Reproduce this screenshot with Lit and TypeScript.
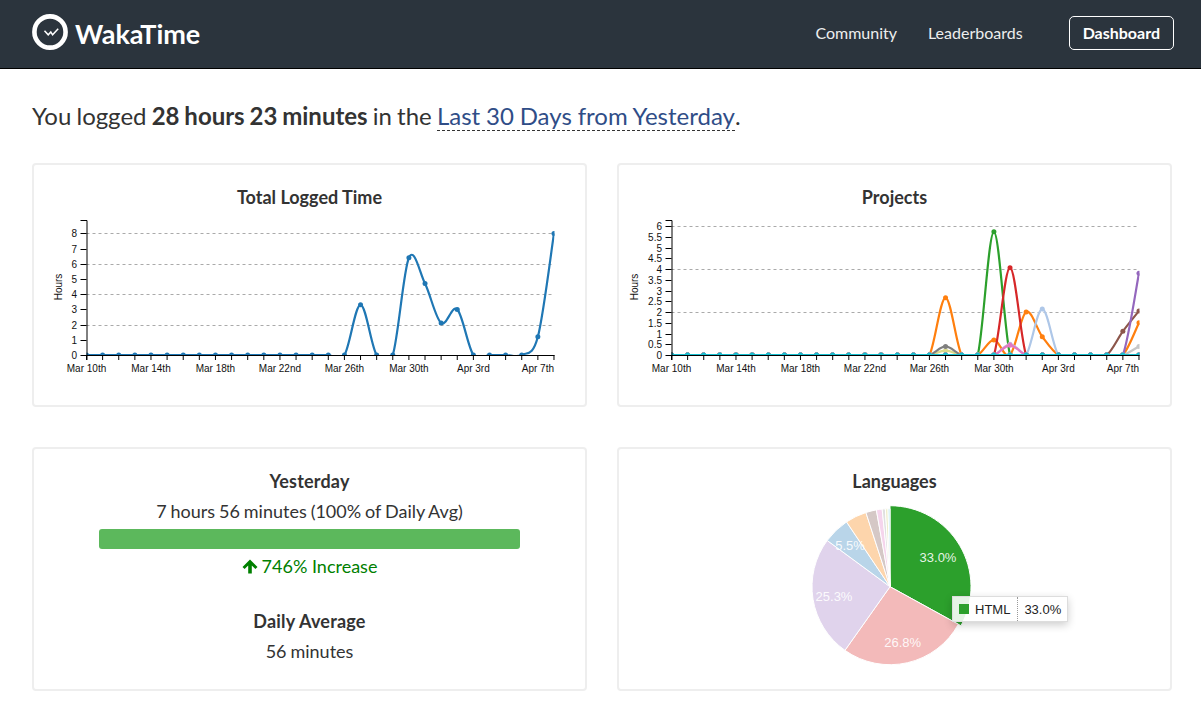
import { LitElement, html, css, svg } from "lit";
import { customElement } from "lit/decorators.js";

type Series = { color: string; values: Record<number, number> };

const LABELS = ["Mar 10th", "Mar 14th", "Mar 18th", "Mar 22nd", "Mar 26th", "Mar 30th", "Apr 3rd", "Apr 7th"];
const COUNT = 30;
const STEP = 16.12;

const TOTAL: Series[] = [
  { color: "#1f77b4", values: { 17: 3.3, 20: 6.4, 21: 4.7, 22: 2.1, 23: 3, 28: 1.2, 29: 8 } },
];

const PROJECTS: Series[] = [
  { color: "#dbdb8d", values: { 17: 0.2 } },
  { color: "#7f7f7f", values: { 17: 0.4 } },
  { color: "#ff7f0e", values: { 17: 2.66, 20: 0.7, 22: 2, 23: 0.85, 29: 1.5 } },
  { color: "#2ca02c", values: { 20: 5.73 } },
  { color: "#c5b0d5", values: { 21: 0.5 } },
  { color: "#d62728", values: { 21: 4.06 } },
  { color: "#e377c2", values: { 21: 0.45 } },
  { color: "#aec7e8", values: { 23: 2.14 } },
  { color: "#8c564b", values: { 28: 1.1, 29: 2.05 } },
  { color: "#9467bd", values: { 29: 3.8 } },
  { color: "#c7c7c7", values: { 29: 0.4 } },
  { color: "#17becf", values: {} },
];

const SLICES = [
  { pct: 33, color: "#2ca02c" },
  { pct: 26.8, color: "#f3baba" },
  { pct: 25.3, color: "#e0d3ec" },
  { pct: 5.5, color: "#b9d5e9" },
  { pct: 4.4, color: "#fdd5ac" },
  { pct: 2.2, color: "#d5c8c6" },
  { pct: 1.2, color: "#f5d5ec" },
  { pct: 0.65, color: "#e0e0e0" },
  { pct: 0.55, color: "#eeeecb" },
  { pct: 0.4, color: "#bbeaf0" },
];

const PIE_LABELS = [
  { text: "33.0%", x: 126, y: 57 },
  { text: "26.8%", x: 90.7, y: 141.5 },
  { text: "25.3%", x: 22, y: 95.5 },
  { text: "5.5%", x: 38, y: 45 },
];

// catmull-rom through the points, like the d3 "cardinal" line of the original
function linePath(points: [number, number][]) {
  let d = `M${points[0][0]},${points[0][1]}`;
  for (let i = 0; i < points.length - 1; i++) {
    const p0 = points[Math.max(i - 1, 0)];
    const p1 = points[i];
    const p2 = points[i + 1];
    const p3 = points[Math.min(i + 2, points.length - 1)];
    const c1x = p1[0] + (p2[0] - p0[0]) / 6;
    const c1y = p1[1] + (p2[1] - p0[1]) / 6;
    const c2x = p2[0] - (p3[0] - p1[0]) / 6;
    const c2y = p2[1] - (p3[1] - p1[1]) / 6;
    d += `C${c1x.toFixed(2)},${c1y.toFixed(2)} ${c2x.toFixed(2)},${c2y.toFixed(2)} ${p2[0].toFixed(2)},${p2[1].toFixed(2)}`;
  }
  return d;
}

function slicePath(cx: number, cy: number, r: number, from: number, to: number) {
  const a0 = (from / 100) * Math.PI * 2;
  const a1 = (to / 100) * Math.PI * 2;
  const large = to - from > 50 ? 1 : 0;
  const x0 = cx + r * Math.sin(a0);
  const y0 = cy - r * Math.cos(a0);
  const x1 = cx + r * Math.sin(a1);
  const y1 = cy - r * Math.cos(a1);
  return `M${cx},${cy}L${x0.toFixed(2)},${y0.toFixed(2)}A${r},${r} 0 ${large} 1 ${x1.toFixed(2)},${y1.toFixed(2)}Z`;
}

@customElement("line-chart")
class LineChart extends LitElement {
  static properties = {
    series: { attribute: false },
    ticks: { attribute: false },
    grid: { attribute: false },
    scale: { type: Number },
    labelX: { type: Number },
  };

  series: Series[] = [];
  ticks: number[] = [];
  grid: number[] = [];
  scale = 1;
  labelX = 14;

  static styles = css`
    :host {
      display: block;
      height: 170px;
    }
    svg {
      display: block;
      overflow: visible;
    }
    text {
      font-family: "Liberation Sans", Arial, sans-serif;
      font-size: 10px;
      fill: #111;
    }
    .axis {
      stroke: #000;
      stroke-width: 1;
      fill: none;
    }
    .grid {
      stroke: #aaa;
      stroke-width: 1;
      stroke-dasharray: 3 3;
    }
    .line {
      fill: none;
      stroke-width: 2.2;
    }
  `;

  render() {
    const y0 = 146;
    const x0 = 39.5;
    const xs = Array.from({ length: COUNT }, (_, i) => x0 + i * STEP);
    const right = xs[COUNT - 1];
    const id = `clip${this.ticks.length}`;
    return html`<svg width="550" height="170" viewBox="0 0 550 170">
      <defs>
        <clipPath id=${id}><rect x=${x0} y="0" width=${right - x0 + 0.5} height=${y0 + 0.5}></rect></clipPath>
      </defs>
      ${this.grid.map((v) => {
        const y = Math.round(y0 - v * this.scale) + 0.5;
        return svg`<line class="grid" x1=${x0} x2=${right} y1=${y} y2=${y}></line>`;
      })}
      <g clip-path=${`url(#${id})`}>
        ${this.series.map((s) => {
          const pts = xs.map((x, i) => [x, y0 - (s.values[i] ?? 0) * this.scale] as [number, number]);
          return svg`<path class="line" stroke=${s.color} d=${linePath(pts)}></path>
            ${pts.map((p) => svg`<circle cx=${p[0]} cy=${p[1]} r="2.5" fill=${s.color}></circle>`)}`;
        })}
      </g>
      <path class="axis" d="M${x0 - 6},11.5H${x0 + 0.5}V${y0 + 5}M${x0},${y0 + 0.5}H${right + 0.5}"></path>
      ${this.ticks.map((v) => {
        const y = Math.round(y0 - v * this.scale) + 0.5;
        return svg`<line class="axis" x1=${x0 - 6} x2=${x0} y1=${y} y2=${y}></line>
          <text x=${x0 - 9.5} y=${y + 3.5} text-anchor="end">${v}</text>`;
      })}
      ${xs.map((x) => svg`<line class="axis" x1=${x} x2=${x} y1=${y0} y2=${y0 + 5}></line>`)}
      ${LABELS.map(
        (l, i) => svg`<text x=${x0 + i * 4 * STEP} y=${y0 + 17} text-anchor="middle">${l}</text>`,
      )}
      <text transform="translate(${this.labelX},${y0 - 68}) rotate(-90)" text-anchor="middle">Hours</text>
    </svg>`;
  }
}

@customElement("pie-chart")
class PieChart extends LitElement {
  static styles = css`
    :host {
      display: block;
      position: relative;
      width: 156px;
      height: 170px;
    }
    svg {
      display: block;
      overflow: visible;
    }
    text {
      font-family: "Liberation Sans", Arial, sans-serif;
      font-size: 13px;
      fill: rgba(255, 255, 255, 0.9);
      text-anchor: middle;
    }
    .tip {
      position: absolute;
      left: 140px;
      top: 91px;
      display: flex;
      align-items: center;
      height: 26px;
      box-sizing: border-box;
      background: rgba(255, 255, 255, 0.88);
      border: 1px solid #ddd;
      box-shadow: 0 3px 9px rgba(0, 0, 0, 0.2);
      font-family: "Liberation Sans", Arial, sans-serif;
      font-size: 13px;
      color: #222;
      white-space: nowrap;
    }
    .tip .key {
      display: flex;
      align-items: center;
      gap: 6px;
      padding: 0 7px 0 6px;
      height: 100%;
      border-right: 1px dotted #999;
    }
    .tip i {
      display: block;
      width: 10px;
      height: 10px;
      background: #2ca02c;
    }
    .tip .val {
      padding: 0 6px;
    }
  `;

  render() {
    const cx = 78;
    const cy = 81.7;
    let at = 0;
    return html`<svg width="156" height="170" viewBox="0 0 156 170">
        ${SLICES.map((s, i) => {
          const d = slicePath(cx, cy, i === 0 ? 81 : 78, at, at + s.pct);
          at += s.pct;
          return svg`<path d=${d} fill=${s.color} stroke="#fff" stroke-width="1"></path>`;
        })}
        ${PIE_LABELS.map((l) => svg`<text x=${l.x} y=${l.y}>${l.text}</text>`)}
      </svg>
      <div class="tip">
        <div class="key"><i></i>HTML</div>
        <div class="val">33.0%</div>
      </div>`;
  }
}

@customElement("app-root")
class AppRoot extends LitElement {
  static styles = css`
    :host {
      display: block;
      font-family: Lato, sans-serif;
      color: #333;
      background: #fff;
    }
    header {
      display: flex;
      align-items: center;
      justify-content: space-between;
      height: 68px;
      padding: 0 27px 0 32px;
      background: #2b343d;
      border-bottom: 1px solid #000;
    }
    .brand {
      display: flex;
      align-items: center;
      gap: 7px;
      padding-bottom: 2px;
      color: #fff;
      font-size: 27px;
      font-weight: 700;
    }
    .brand svg {
      display: block;
      margin-bottom: 2px;
    }
    nav {
      display: flex;
      align-items: center;
      padding-bottom: 2px;
      font-size: 16px;
      line-height: 20px;
      color: #eee;
    }
    nav a + a {
      margin-left: 31px;
    }
    nav a.btn {
      margin-left: 46px;
      padding: 6px 13px;
      border: 1px solid #fff;
      border-radius: 5px;
      color: #fff;
      font-weight: 700;
    }
    main {
      padding: 31px 29px 0 32px;
    }
    .lede {
      margin: 0 0 31px;
      font-size: 24px;
      line-height: 32px;
      word-spacing: -1px;
      color: #333;
    }
    .lede b {
      font-weight: 700;
    }
    .lede a {
      color: #2f4d87;
      word-spacing: -0.3px;
      border-bottom: 1px dashed #333;
    }
    .grid {
      display: grid;
      grid-template-columns: 555px 555px;
      column-gap: 30px;
      row-gap: 40px;
    }
    .card {
      box-sizing: border-box;
      border: 2px solid #eee;
      border-radius: 4px;
      text-align: center;
    }
    .top {
      height: 244px;
      padding: 20px 0 0;
    }
    h3 {
      margin: 0;
      font-size: 18px;
      line-height: 24px;
      font-weight: 700;
      color: #333;
    }
    .plot {
      margin-left: 13px;
    }
    .pie {
      display: flex;
      justify-content: center;
      padding: 12px 9px 0 0;
    }
    .stats {
      padding: 20px 65px 0;
      font-size: 18px;
      line-height: 24px;
    }
    .stats h3 {
      letter-spacing: 0.2px;
    }
    .stats p {
      margin: 6px 0 0;
      word-spacing: -0.7px;
    }
    .bar {
      height: 20px;
      margin-top: 6px;
      border-radius: 3px;
      background: #5cb85c;
    }
    .stats p.up {
      margin-top: 5px;
      color: #008000;
      word-spacing: 0;
      display: flex;
      justify-content: center;
      align-items: center;
      gap: 4px;
    }
    .stats h3.second {
      margin-top: 31px;
    }
  `;

  render() {
    return html`
      <header>
        <div class="brand">
          <svg width="36" height="36" viewBox="0 0 36 36">
            <circle cx="18" cy="18" r="15.6" fill="none" stroke="#fff" stroke-width="4.6"></circle>
            <path d="M12.5 16.8L16.2 20.8L18.8 18L20.6 20.8L26.2 14.8" fill="none" stroke="#fff" stroke-width="1.5"></path>
          </svg>
          WakaTime
        </div>
        <nav>
          <a>Community</a>
          <a>Leaderboards</a>
          <a class="btn">Dashboard</a>
        </nav>
      </header>
      <main>
        <p class="lede">
          You logged <b>28 hours 23 minutes</b> in the <a>Last 30 Days from Yesterday</a>.
        </p>
        <div class="grid">
          <section class="card top">
            <h3>Total Logged Time</h3>
            <div class="plot">
              <line-chart
                .series=${TOTAL}
                .ticks=${[0, 1, 2, 3, 4, 5, 6, 7, 8]}
                .grid=${[2, 4, 6, 8]}
                .scale=${15.2}
                .labelX=${14.5}
              ></line-chart>
            </div>
          </section>
          <section class="card top">
            <h3>Projects</h3>
            <div class="plot">
              <line-chart
                .series=${PROJECTS}
                .ticks=${[0, 0.5, 1, 1.5, 2, 2.5, 3, 3.5, 4, 4.5, 5, 5.5, 6]}
                .grid=${[2, 4, 6]}
                .scale=${21.5}
                .labelX=${5.5}
              ></line-chart>
            </div>
          </section>
          <section class="card top stats">
            <h3>Yesterday</h3>
            <p>7 hours 56 minutes (100% of Daily Avg)</p>
            <div class="bar"></div>
            <p class="up">
              <svg width="16" height="15" viewBox="0 0 16 15">
                <path d="M8 0.5L15.5 8L13.4 10L9.8 6.4V14.5H6.2V6.4L2.6 10L0.5 8Z" fill="#008000"></path>
              </svg>
              746% Increase
            </p>
            <h3 class="second">Daily Average</h3>
            <p>56 minutes</p>
          </section>
          <section class="card top">
            <h3>Languages</h3>
            <div class="pie"><pie-chart></pie-chart></div>
          </section>
        </div>
      </main>
    `;
  }
}
